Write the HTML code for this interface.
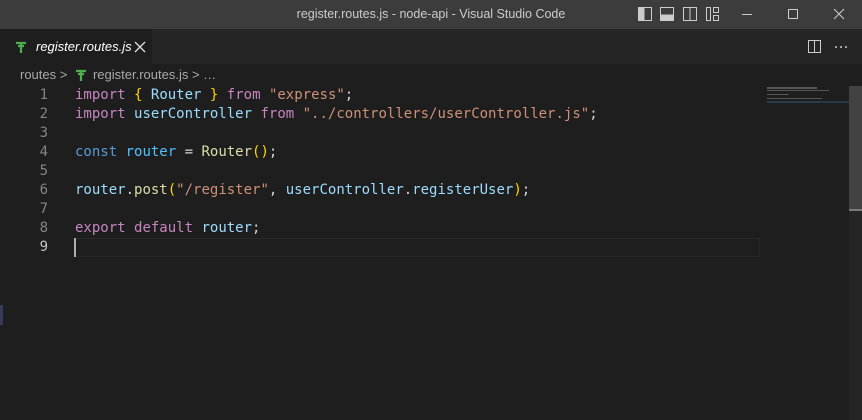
<!DOCTYPE html>
<html><head><style>
*{margin:0;padding:0;box-sizing:border-box}
body{width:862px;height:420px;background:#1e1e1e;overflow:hidden;position:relative;font-family:"Liberation Sans",sans-serif}
.title{position:absolute;top:0;left:0;width:862px;height:29px;background:#3c3c3c;color:#cccccc;font-size:12.5px;text-align:center;line-height:29px}
.tabs{position:absolute;top:29px;left:0;width:862px;height:35px;background:#252526}
.tab{position:absolute;left:0;top:0;width:152px;height:35px;background:#1e1e1e;color:#fff;font-style:italic;font-size:13px;line-height:35px;padding-left:36px;white-space:nowrap}
.crumb{position:absolute;top:66px;left:20px;color:#a9a9a9;font-size:13px;line-height:18px;white-space:nowrap}
.code{position:absolute;top:86px;left:0;font-family:"DejaVu Sans Mono",monospace;font-size:14px;line-height:19px;white-space:pre}
.ln{position:absolute;left:0;width:48px;text-align:right;color:#858585}
.tx{position:absolute;left:75px;color:#d4d4d4}
.k{color:#c586c0}.v{color:#9cdcfe}.s{color:#ce9178}.f{color:#dcdcaa}.b{color:#ffd700}.c{color:#569cd6}.t{color:#4fc1ff}
</style></head><body>
<div class="title">register.routes.js - node-api - Visual Studio Code</div>
<svg style="position:absolute;left:0;top:0" width="862" height="29">
<g fill="none" stroke="#ccc" stroke-width="1">
<rect x="638.5" y="7.5" width="13" height="13"/><rect x="639" y="8" width="5" height="12" fill="#ccc"/>
<rect x="660.5" y="7.5" width="13" height="13"/><rect x="661" y="15" width="12" height="5" fill="#ccc"/>
<rect x="683.5" y="7.5" width="13" height="13"/><line x1="690" y1="8" x2="690" y2="20"/>
<rect x="706.5" y="7.5" width="4" height="13"/><rect x="713.5" y="7.5" width="5" height="5"/><rect x="713.5" y="15.5" width="5" height="5"/>
<line x1="742" y1="14.5" x2="752" y2="14.5"/>
<rect x="788.5" y="9.5" width="9" height="9"/>
<path d="M834 9l10 10M844 9l-10 10"/>
</g></svg>
<div class="tabs"><div class="tab">register.routes.js</div>
<svg style="position:absolute;left:134px;top:12px" width="12" height="12"><path d="M1 1l10 10M11 1L1 11" stroke="#ddd" stroke-width="1.3"/></svg>
<svg style="position:absolute;left:14px;top:11px" width="14" height="14"><path d="M2 3h10M4 6h6M7 3v10" stroke="#4caf50" stroke-width="2.2" fill="none"/></svg>
<svg style="position:absolute;left:806px;top:10px" width="50" height="16"><rect x="2.5" y="1.5" width="12" height="12" fill="none" stroke="#ccc"/><line x1="8.5" y1="2" x2="8.5" y2="13" stroke="#ccc"/><circle cx="30" cy="8" r="1" fill="#ccc"/><circle cx="35" cy="8" r="1" fill="#ccc"/><circle cx="40" cy="8" r="1" fill="#ccc"/></svg>
</div>
<div class="crumb">routes &gt; <span style="display:inline-block;width:22px"></span>register.routes.js &gt; …</div>
<svg style="position:absolute;left:74px;top:68px" width="14" height="14"><path d="M2 3h10M4 6h6M7 3v10" stroke="#4caf50" stroke-width="2.2" fill="none"/></svg>
<div style="position:absolute;left:74px;top:238px;width:686px;height:19px;border:1px solid #282828"></div>
<div style="position:absolute;left:74px;top:238px;width:2px;height:19px;background:#aeafad"></div>
<div class="code">
<div class="ln" style="top:0">1</div><div class="tx" style="top:0"><span class="k">import</span> <span class="b">{</span> <span class="v">Router</span> <span class="b">}</span> <span class="k">from</span> <span class="s">"express"</span>;</div>
<div class="ln" style="top:19px">2</div><div class="tx" style="top:19px"><span class="k">import</span> <span class="v">userController</span> <span class="k">from</span> <span class="s">"../controllers/userController.js"</span>;</div>
<div class="ln" style="top:38px">3</div>
<div class="ln" style="top:57px">4</div><div class="tx" style="top:57px"><span class="c">const</span> <span class="t">router</span> = <span class="f">Router</span><span class="b">()</span>;</div>
<div class="ln" style="top:76px">5</div>
<div class="ln" style="top:95px">6</div><div class="tx" style="top:95px"><span class="v">router</span>.<span class="f">post</span><span class="b">(</span><span class="s">"/register"</span>, <span class="v">userController</span>.<span class="v">registerUser</span><span class="b">)</span>;</div>
<div class="ln" style="top:114px">7</div>
<div class="ln" style="top:133px">8</div><div class="tx" style="top:133px"><span class="k">export</span> <span class="k">default</span> <span class="v">router</span>;</div>
<div class="ln" style="top:152px;color:#c6c6c6">9</div>
</div>
<div style="position:absolute;left:767px;top:87px;width:50px;height:2px;background:#555"></div>
<div style="position:absolute;left:767px;top:90px;width:62px;height:1px;background:#555"></div>
<div style="position:absolute;left:767px;top:94px;width:22px;height:1px;background:#555"></div>
<div style="position:absolute;left:767px;top:98px;width:55px;height:1px;background:#555"></div>
<div style="position:absolute;left:767px;top:101px;width:82px;height:2px;background:#2a3a4a"></div>
<div style="position:absolute;left:849px;top:86px;width:13px;height:334px;background:#252525"></div>
<div style="position:absolute;left:849px;top:86px;width:13px;height:123px;background:#424242"></div>
<div style="position:absolute;left:849px;top:209px;width:13px;height:2px;background:#7a7a7a"></div>
<div style="position:absolute;left:0;top:305px;width:3px;height:20px;background:#3a3a5a"></div>
</body></html>
